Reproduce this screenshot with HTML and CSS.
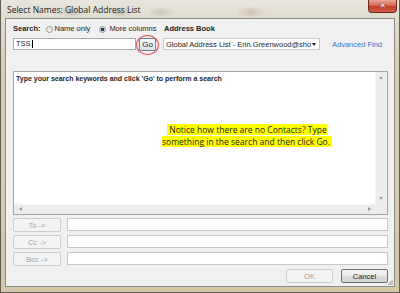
FILE: index.html
```html
<!DOCTYPE html>
<html>
<head>
<meta charset="utf-8">
<link rel="stylesheet" href="styles.css">
</head>
<body>
<div class="window">
  <div class="titlebar">
    <span class="title">Select Names: Global Address List</span>
    <span class="close"><span class="x">✕</span></span>
  </div>
  <div class="client">
    <div class="row-labels">
      <div class="search-opts">
        <span class="lbl bold">Search:</span>
        <span class="radio first"></span><span class="lbl">Name only</span>
        <span class="radio checked"></span><span class="lbl">More columns</span>
      </div>
      <span class="lbl bold">Address Book</span>
    </div>
    <div class="row-inputs">
      <div class="textbox">TSS<span class="caret"></span></div>
      <div class="go-wrap"><div class="btn go">Go</div><span class="ring"></span></div>
      <div class="dropdown"><span class="dd-text">Global Address List - Erin.Greenwood@sho</span><span class="dd-arrow"></span></div>
      <span class="link">Advanced Find</span>
    </div>
    <div class="listbox">
      <div class="list-main">
        <div class="list-content">
          <div class="hint">Type your search keywords and click 'Go' to perform a search</div>
          <div class="note"><span class="hl">Notice how there are no Contacts? Type<br>something in the search and then click Go.</span></div>
        </div>
        <div class="vscroll"><span class="arr up"></span><span class="arr down"></span></div>
      </div>
      <div class="hscroll-row">
        <div class="hscroll"><span class="arr left"></span><span class="arr right"></span></div>
        <div class="corner"></div>
      </div>
    </div>
    <div class="recips">
      <div class="recip"><div class="btn disabled rbtn">To -&gt;</div><div class="field"></div></div>
      <div class="recip"><div class="btn disabled rbtn">Cc -&gt;</div><div class="field"></div></div>
      <div class="recip"><div class="btn disabled rbtn">Bcc -&gt;</div><div class="field"></div></div>
    </div>
    <div class="actions">
      <div class="btn disabled act">OK</div>
      <div class="btn act cancel">Cancel</div>
    </div>
    <span class="grip"></span>
  </div>
</div>
</body>
</html>
```
FILE: styles.css
```css
html, body { margin: 0; padding: 0; }
body { width: 400px; height: 293px; overflow: hidden; font-family: "Liberation Sans", Arial, sans-serif; color: #1e1e1e; white-space: nowrap; }
.window {
  width: 400px; height: 293px; box-sizing: border-box;
  border: 1px solid #5f5f58; border-top: none;
  background:
    radial-gradient(ellipse 14px 6px at 70px 12px, rgba(150,140,120,0.35), transparent),
    radial-gradient(ellipse 14px 6px at 120px 12px, rgba(150,140,120,0.35), transparent),
    radial-gradient(ellipse 14px 6px at 160px 12px, rgba(150,140,120,0.3), transparent),
    radial-gradient(ellipse 16px 6px at 250px 12px, rgba(170,130,100,0.3), transparent),
    linear-gradient(to bottom, #e8e5dd 0px, #e2ddd0 18px, #d7ceb4 60px, #d3c8a8 100%);
  display: flex; flex-direction: column;
  padding: 0 4px 5px 4px;
}
.titlebar { height: 18px; display: flex; justify-content: space-between; align-items: flex-start; }
.title { font-family: "Open Sans", "Noto Sans", sans-serif; font-size: 8.5px; color: #1a1a1a; margin: 4px 0 0 2px; }
.close {
  width: 29px; height: 13px; box-sizing: border-box; margin-right: -2px;
  border: 1px solid #6e2a22; border-top: none; border-radius: 0 0 4px 4px;
  background: linear-gradient(to bottom, #e9a596 0%, #d66a57 45%, #c43b25 55%, #d0604a 100%);
  display: flex; align-items: center; justify-content: center;
}
.close .x { color: #fff; font-size: 8px; font-weight: bold; line-height: 1; text-shadow: 0 0 1px #5a1a10, 0 0 1px #5a1a10; font-family: "DejaVu Sans", sans-serif; }
.client {
  flex: 1; position: relative; box-sizing: border-box;
  background: #f0f0f0; border: 1px solid #8c8c86;
  padding: 4px 6px 0 7px;
  display: flex; flex-direction: column;
}
.lbl { font-size: 7.5px; line-height: 12px; color: #1e1e1e; }
.bold { font-weight: bold; }
.row-labels { display: flex; height: 12px; align-items: center; }
.search-opts { width: 151px; display: flex; align-items: center; }
.radio {
  width: 7px; height: 7px; box-sizing: border-box; border-radius: 50%;
  border: 1px solid #9a9a9a; background: radial-gradient(circle, #f4f4f4, #dcdcdc);
  margin: 0 3px 0 9px; flex: none;
}
.radio.first { margin-left: 5px; margin-right: 2px; }
.radio.checked { background: radial-gradient(circle, #2d3a50 0 1.6px, #c9d3e0 2px); }
.row-inputs { display: flex; align-items: center; margin-top: 2px; height: 14px; }
.textbox {
  width: 123px; height: 12px; box-sizing: border-box; background: #fff; flex: none;
  border: 1px solid #a9abae; font-size: 7.5px; line-height: 10px; padding-left: 2px; display: flex; align-items: center;
}
.caret { width: 1px; height: 8px; background: #000; margin-left: 1px; }
.go-wrap { position: relative; margin-left: 3px; flex: none; }
.btn {
  box-sizing: border-box; display: flex; align-items: center; justify-content: center;
  font-size: 7.5px; border-radius: 2px; flex: none;
}
.go { width: 17px; height: 13px; border: 1px solid #6f7f92; background: linear-gradient(#f4f6f8, #dfe3e8); color: #1e1e1e; font-size: 8px; }
.ring {
  position: absolute; left: -3px; top: -3px; width: 23px; height: 20px; box-sizing: border-box;
  border: 1.3px solid #e0505a; border-radius: 50%; box-shadow: 0 0 1px rgba(224,80,90,0.5);
}
.dropdown {
  margin-left: 7px; width: 157px; height: 12px; box-sizing: border-box; background: #fff; border: 1px solid #c9c9c9; flex: none;
  display: flex; align-items: center; justify-content: space-between; padding: 0 3px 0 2px; overflow: hidden;
}
.dd-text { font-size: 7.5px; white-space: nowrap; overflow: hidden; width: 145px; }
.dd-arrow { width: 0; height: 0; border-left: 2.5px solid transparent; border-right: 2.5px solid transparent; border-top: 3px solid #222; }
.link { margin-left: 12px; font-size: 7.5px; color: #3a76c4; }
.listbox {
  margin-top: 20px; height: 144px; box-sizing: border-box; border: 1px solid #a4a4a4; background: #fff;
  display: flex; flex-direction: column;
}
.list-main { flex: 1; display: flex; }
.list-content { flex: 1; padding: 2px 2px; }
.hint { font-size: 7px; font-weight: bold; color: #1e1e1e; line-height: 9px; }
.note { margin-top: 41px; margin-left: 141px; text-align: center; width: 180px; font-family: "Open Sans", "Noto Sans", sans-serif; font-size: 8.5px; line-height: 12px; color: #222; }
.hl { background: #ffff00; padding: 0 2px; }
.vscroll { width: 11px; background: #ececec; border-left: 1px solid #f6f6f6; position: relative; }
.hscroll-row { height: 10px; display: flex; }
.hscroll { flex: 1; background: #ececec; position: relative; border-top: 1px solid #f6f6f6; }
.corner { width: 11px; background: #ececec; }
.arr { position: absolute; width: 0; height: 0; }
.arr.up { left: 3px; top: 4px; border-left: 2.5px solid transparent; border-right: 2.5px solid transparent; border-bottom: 3px solid #9a9a9a; }
.arr.down { left: 3px; bottom: 4px; border-left: 2.5px solid transparent; border-right: 2.5px solid transparent; border-top: 3px solid #9a9a9a; }
.arr.left { left: 5px; top: 2px; border-top: 2.5px solid transparent; border-bottom: 2.5px solid transparent; border-right: 3px solid #9a9a9a; }
.arr.right { right: 5px; top: 2px; border-top: 2.5px solid transparent; border-bottom: 2.5px solid transparent; border-left: 3px solid #9a9a9a; }
.recips { margin-top: 3px; display: flex; flex-direction: column; gap: 3px; }
.recip { display: flex; align-items: flex-start; }
.rbtn { width: 48px; height: 14px; }
.disabled { border: 1px solid #cdcdcd; background: #f3f3f3; color: #a3a3a3; }
.field { margin-left: 6px; flex: 1; height: 13px; box-sizing: border-box; background: #fff; border: 1px solid #c6c6c6; }
.actions { margin-top: 3px; display: flex; justify-content: flex-end; gap: 8px; }
.act { width: 47px; height: 14px; }
.cancel { border: 1px solid #707070; background: linear-gradient(#f4f4f4 0%, #ebebeb 50%, #dcdcdc 51%, #d4d4d4 100%); color: #1e1e1e; }
.grip {
  position: absolute; right: 1px; bottom: 1px; width: 6px; height: 6px;
  background: radial-gradient(circle, #a8a8a8 0.6px, transparent 0.9px) 0 0 / 2px 2px;
  clip-path: polygon(100% 0, 100% 100%, 0 100%);
}
```
